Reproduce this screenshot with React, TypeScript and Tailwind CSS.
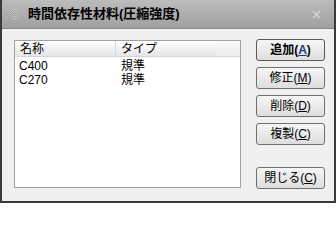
import React from 'react';

const FONT = { fontFamily: '"Liberation Sans", "Noto Sans CJK JP", sans-serif' };

const rows = [
  { name: 'C400', type: '規準' },
  { name: 'C270', type: '規準' },
];

function DlgButton({ label, hot, bold }: { label: string; hot: string; bold?: boolean }) {
  return (
    <button
      className={`w-[69px] h-[22px] shrink-0 rounded-[3px] border ${bold ? 'border-[#5a5a5a]' : 'border-[#707070]'} bg-gradient-to-b from-[#f6f6f6] to-[#dedede] text-[12px] leading-none text-black flex items-center justify-center ${bold ? 'font-bold' : ''}`}
    >
      {label}(<span className={`underline ${bold ? 'text-[#1a3a8a]' : ''}`}>{hot}</span>)
    </button>
  );
}

export default function App() {
  return (
    <div className="w-[336px] h-[203px] overflow-hidden flex flex-col border-l-2 border-r-2 border-b-2 border-[#3a3a3a] bg-[#f0f0f0]" style={FONT}>
      {/* title bar */}
      <div className="h-[29px] shrink-0 flex items-center bg-gradient-to-b from-[#bcbcbc] to-[#a0a0a0] border-b border-[#888888] pl-[8px] pr-[13px]">
        <svg width="10" height="12" viewBox="0 0 10 12" className="mr-[8px]">
          <path d="M2 5 L5 2 L8 5" fill="none" stroke="#e8e8e8" strokeWidth="1.6" />
          <path d="M2 7 L5 10 L8 7" fill="none" stroke="#e8e8e8" strokeWidth="1.6" />
          <path d="M2 5 L5 2 L8 5" fill="none" stroke="#707070" strokeWidth="0.8" />
          <path d="M2 7 L5 10 L8 7" fill="none" stroke="#707070" strokeWidth="0.8" />
        </svg>
        <span className="text-[13px] font-bold text-black">時間依存性材料(圧縮強度)</span>
        <span className="ml-auto">
          <svg width="9" height="9" viewBox="0 0 9 9">
            <path d="M1 1 L8 8 M8 1 L1 8" stroke="#d4d4d4" strokeWidth="1.6" />
          </svg>
        </span>
      </div>

      {/* body */}
      <div className="flex-1 min-h-0 flex items-start pl-[12px] pt-[10px]">
        <div className="mt-[1px] w-[227px] h-[148px] border border-[#a0a0a0] bg-white flex flex-col">
          <div className="h-[16px] flex text-[12px] leading-none text-black border-b border-[#d6d6d6]">
            <div className="w-[101px] pl-[5px] flex items-center bg-gradient-to-b from-[#ffffff] to-[#e6e6e6] border-r border-[#d8d8d8]">名称</div>
            <div className="w-[100px] pl-[5px] flex items-center bg-gradient-to-b from-[#ffffff] to-[#e6e6e6]">タイプ</div>
            <div className="flex-1 bg-gradient-to-b from-[#fafafa] to-[#ededed]"></div>
          </div>
          <div className="pt-[2px]">
            {rows.map((r) => (
              <div key={r.name} className="h-[14px] flex items-center text-[12px] leading-none text-black">
                <div className="w-[101px] pl-[4px]">{r.name}</div>
                <div className="pl-[5px]">{r.type}</div>
              </div>
            ))}
          </div>
        </div>

        <div className="ml-[15px] flex flex-col gap-[6px]">
          <DlgButton label="追加" hot="A" bold />
          <DlgButton label="修正" hot="M" />
          <DlgButton label="削除" hot="D" />
          <DlgButton label="複製" hot="C" />
          <div className="h-[10px]"></div>
          <DlgButton label="閉じる" hot="C" />
        </div>
      </div>
    </div>
  );
}
